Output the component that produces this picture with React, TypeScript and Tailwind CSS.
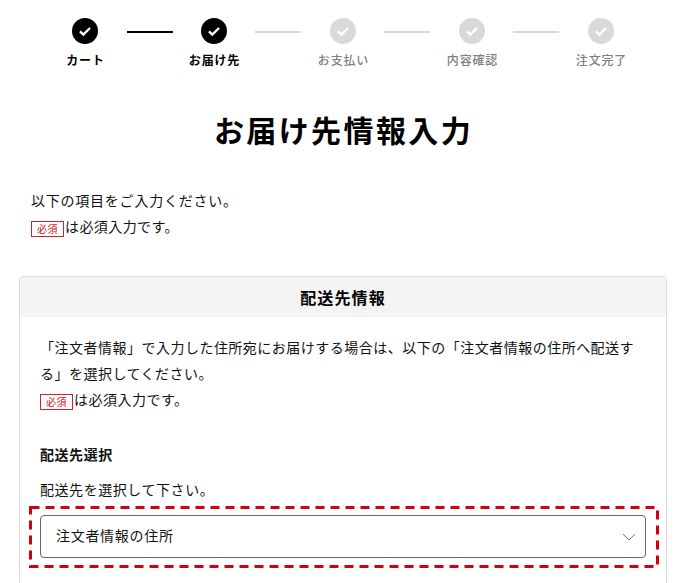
const font = { fontFamily: '"Noto Sans CJK JP", "Noto Sans", sans-serif' };

const steps = [
  { label: "カート", done: true },
  { label: "お届け先", done: true },
  { label: "お支払い", done: false },
  { label: "内容確認", done: false },
  { label: "注文完了", done: false },
];

function Required() {
  return (
    <span className="mr-px inline-flex h-[16px] w-[33px] items-center justify-center border border-[#c8262c] align-[-1px] text-[10px] leading-none text-[#d0121b]">
      必須
    </span>
  );
}

function Stepper() {
  return (
    <ol className="grid grid-cols-[repeat(5,129px)] px-[20px] pt-[18px]">
      {steps.map((step, i) => (
        <li key={step.label} className="relative flex flex-col items-center">
          <span
            className={
              step.done
                ? "flex h-[26px] w-[26px] items-center justify-center rounded-full bg-black"
                : "flex h-[26px] w-[26px] items-center justify-center rounded-full bg-[#d9d9d9]"
            }
          >
            <svg width="14" height="14" viewBox="0 0 14 14" fill="none">
              <path d="M2 7.4l3.3 3.2L12 4" stroke="#fff" strokeWidth="2.4" />
            </svg>
          </span>
          <span
            className={
              step.done
                ? "mt-[7px] pl-[2px] text-[12px] leading-[18px] font-bold tracking-[0.07em] text-black"
                : "mt-[7px] pl-[2px] text-[12px] leading-[18px] font-medium tracking-[0.07em] text-[#808080]"
            }
          >
            {step.label}
          </span>
          {i < 4 && (
            <span
              className={
                i === 0
                  ? "absolute top-[13px] left-[calc(50%+42px)] h-[2px] w-[46px] bg-black"
                  : "absolute top-[13px] left-[calc(50%+41.5px)] h-[2px] w-[46px] bg-[#d9d9d9]"
              }
            />
          )}
        </li>
      ))}
    </ol>
  );
}

export default function App() {
  return (
    <div className="h-[583px] overflow-hidden bg-white text-[#111]" style={font}>
      <Stepper />
      <h1 className="mt-[38px] text-center text-[30px] leading-[44px] font-bold tracking-[0.08em] text-black">
        お届け先情報入力
      </h1>
      <div className="mt-[36px] pl-[31px] text-[14px] leading-[26px] tracking-[0.03em]">
        <p className="tracking-[0.055em]">以下の項目をご入力ください。</p>
        <p>
          <Required />
          は必須入力です。
        </p>
      </div>
      <section className="mt-[37px] mr-[20px] ml-[19px] rounded border border-[#dcdcdc] pb-10">
        <h2 className="h-[40px] rounded-t-[3px] bg-[#f4f4f4] text-center text-[16px] leading-[40px] font-bold tracking-[0.07em] text-black">
          配送先情報
        </h2>
        <div className="px-[20px] pt-[17px]">
          <p className="text-[14px] leading-[26px] tracking-[0.035em]">
            「注文者情報」で入力した住所宛にお届けする場合は、以下の「注文者情報の住所へ配送する」を選択してください。
            <br />
            <Required />
            は必須入力です。
          </p>
          <h3 className="mt-[29px] text-[14px] leading-[26px] font-bold tracking-[0.04em]">配送先選択</h3>
          <p className="mt-[9px] text-[14px] leading-[26px] tracking-[0.04em]">配送先を選択して下さい。</p>
          <div className="relative mt-[13px]">
            <div className="flex h-[43px] items-center justify-between rounded border border-[#666] bg-white pr-[9px] pb-[2px] pl-[15px] text-[14px] tracking-[0.05em]">
              <span>注文者情報の住所</span>
              <svg className="mt-[2px]" width="14" height="8" viewBox="0 0 14 8" fill="none">
                <path d="M1 1l6 6 6-6" stroke="#777" strokeWidth="1" />
              </svg>
            </div>
            <svg className="absolute top-[-9px] left-[-11px]" width="630" height="62" fill="none">
              <rect
                x="1.5"
                y="1.5"
                width="627"
                height="59"
                stroke="#d0000f"
                strokeWidth="3"
                strokeDasharray="9 6"
              />
            </svg>
          </div>
        </div>
      </section>
    </div>
  );
}
